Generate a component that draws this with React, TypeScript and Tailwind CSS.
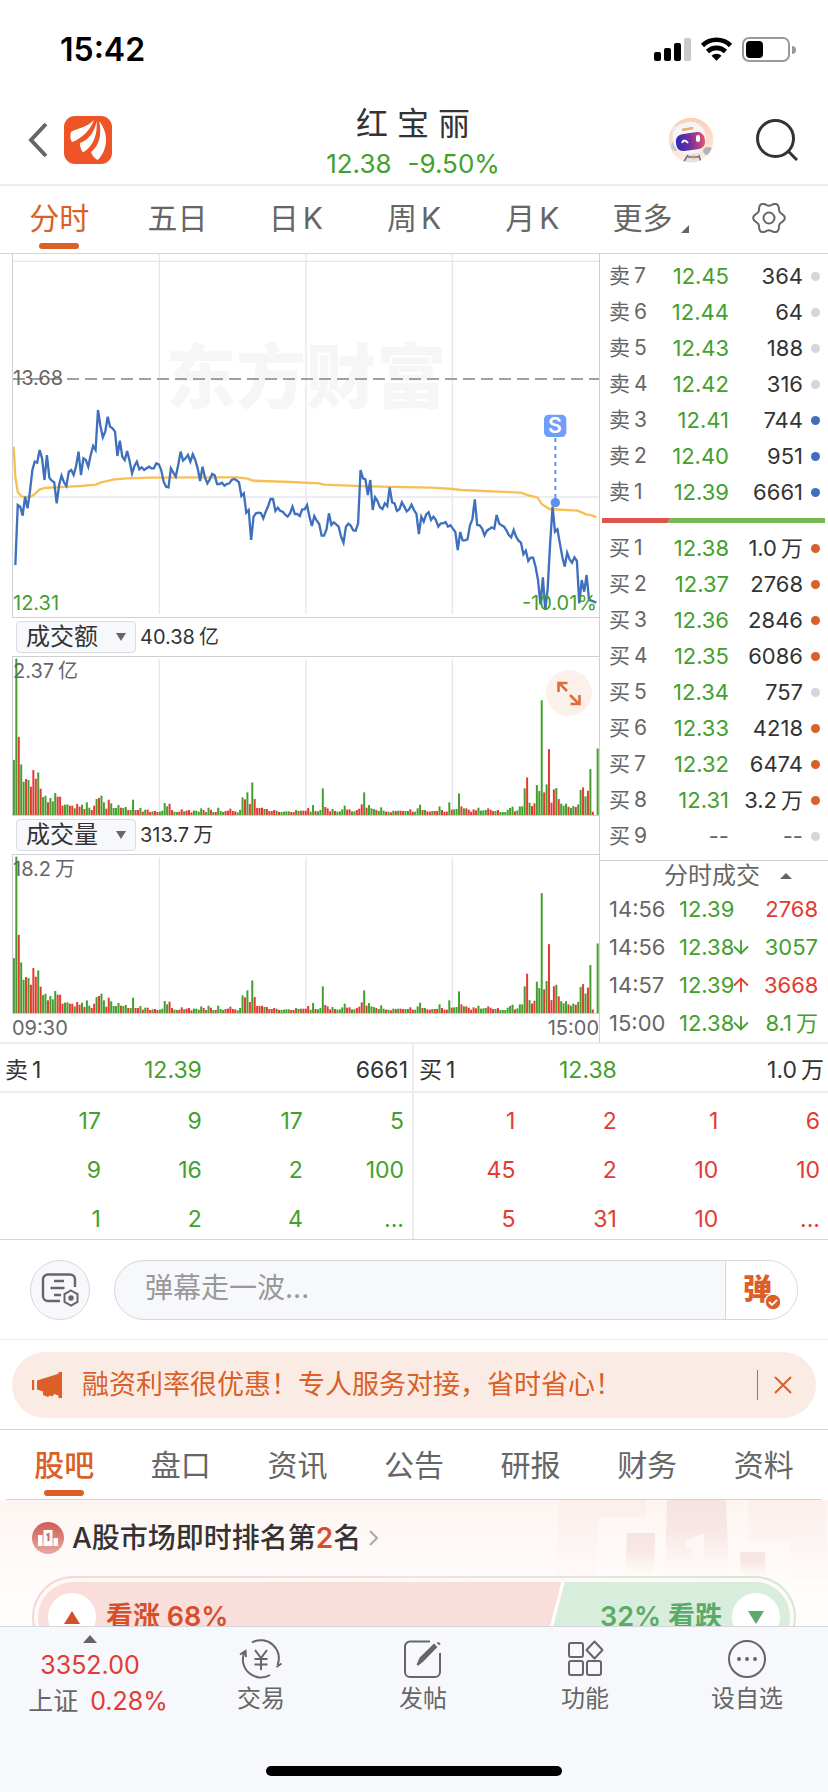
// src/pages/StockDetail.tsx
import React, { useState } from 'react';
import { ArrowDown, ArrowUp } from 'lucide-react';

const CHART_TABS = ['分时', '五日', '日K', '周K', '月K', '更多'];
const INFO_TABS = ['股吧', '盘口', '资讯', '公告', '研报', '财务', '资料'];

const SELLS = [
  ['卖7', '12.45', '364', 'gray'],
  ['卖6', '12.44', '64', 'gray'],
  ['卖5', '12.43', '188', 'gray'],
  ['卖4', '12.42', '316', 'gray'],
  ['卖3', '12.41', '744', 'blue'],
  ['卖2', '12.40', '951', 'blue'],
  ['卖1', '12.39', '6661', 'blue'],
];

const BUYS = [
  ['买1', '12.38', '1.0万', 'orange'],
  ['买2', '12.37', '2768', 'orange'],
  ['买3', '12.36', '2846', 'orange'],
  ['买4', '12.35', '6086', 'orange'],
  ['买5', '12.34', '757', 'gray'],
  ['买6', '12.33', '4218', 'orange'],
  ['买7', '12.32', '6474', 'orange'],
  ['买8', '12.31', '3.2万', 'orange'],
  ['买9', '--', '--', 'gray'],
];

const TRADES = [
  { time: '14:56', price: '12.39', dir: '', qty: '2768', up: true },
  { time: '14:56', price: '12.38', dir: 'down', qty: '3057', up: false },
  { time: '14:57', price: '12.39', dir: 'up', qty: '3668', up: true },
  { time: '15:00', price: '12.38', dir: 'down', qty: '8.1万', up: false },
];

const SELL_QUEUE = [['17', '9', '17', '5'], ['9', '16', '2', '100'], ['1', '2', '4', '...']];
const BUY_QUEUE = [['1', '2', '1', '6'], ['45', '2', '10', '10'], ['5', '31', '10', '...']];

const DOTS: Record<string, string> = {
  gray: 'bg-[#d5d6dc]',
  blue: 'bg-[#3f70bd]',
  orange: 'bg-[#db5f27]',
};

// One value per minute, in chart units (larger is lower)
const PRICE_LINE = [
  945, 765, 770, 797, 740, 775, 725, 660, 635, 638, 600, 625, 690, 615, 683, 692, 697, 760, 705, 677,
  697, 708, 665, 660, 675, 648, 605, 675, 625, 630, 650, 615, 588, 600, 480, 528, 562, 545, 500, 530,
  535, 545, 618, 572, 620, 630, 603, 633, 670, 648, 635, 658, 652, 660, 655, 650, 655, 655, 640, 643,
  660, 695, 710, 712, 655, 668, 680, 645, 605, 632, 625, 615, 635, 613, 630, 655, 693, 650, 682, 700,
  688, 672, 676, 702, 702, 698, 707, 702, 700, 690, 687, 691, 697, 738, 730, 788, 780, 870, 800, 790,
  788, 789, 805, 785, 768, 747, 747, 783, 773, 783, 785, 794, 800, 790, 770, 792, 792, 798, 778, 778,
  765, 800, 828, 798, 812, 822, 857, 857, 838, 790, 825, 817, 823, 830, 860, 878, 830, 821, 827, 841,
  842, 820, 660, 685, 688, 735, 690, 780, 742, 753, 772, 777, 760, 768, 712, 757, 760, 783, 778, 757,
  770, 784, 778, 764, 780, 792, 852, 800, 815, 793, 787, 810, 800, 810, 830, 820, 820, 816, 830, 826,
  836, 846, 900, 846, 871, 871, 868, 827, 808, 748, 825, 826, 836, 856, 842, 837, 832, 836, 795, 820,
  826, 830, 841, 855, 862, 840, 860, 872, 878, 913, 902, 933, 923, 923, 950, 990, 1063, 982, 1080, 1015,
  880, 770, 845, 838, 880, 920, 950, 908, 928, 938, 922, 933, 1060, 990, 1025, 975, 1050, 1052, 1055, 1058,
];

const AVG_LINE =
  '38,590 43,680 50,725 60,738 70,741 88,741 100,733 115,719 130,714 160,712 200,710 240,708 285,704 300,697 340,688 380,685 450,683 600,682 710,682 740,686 755,692 870,696 954,700 970,704 1100,709 1290,713 1355,717 1380,720 1560,728 1578,735 1610,743 1622,762 1645,777 1730,782 1755,793 1775,797 1786,802';

// g = fell, r = rose, followed by the bar height
const BARS =
  'g165 g470 r235 g152 g100 r108 g105 r85 r135 r109 g128 r79 g54 g58 r38 g51 g41 g66 r55 r55 r28 g31 g32 r28 r28 g20 r33 r25 g31 r18 g38 g22 r15 r28 g48 r51 g58 g38 r19 r46 g35 g21 g21 g30 r22 g21 g24 r15 g15 g46 r15 r15 g21 r10 g16 r16 r9 g11 r12 r9 g10 g13 g36 g26 r34 r15 g10 g9 r10 r17 g11 r13 r15 r8 g13 g13 g10 g20 r15 g9 g22 r16 g9 r9 g22 g12 g9 r12 r13 r19 r12 r11 g8 g15 g53 r47 g68 r33 g98 r48 r21 r21 r22 g18 r18 r12 r12 r15 g13 r9 g9 g10 g11 g11 r9 r9 g15 r12 g13 r13 r13 r21 g10 g30 r12 g11 g15 g80 r24 r20 r11 g18 r12 g10 g11 g17 g28 r16 r17 g11 g11 r15 r19 r32 g68 r22 g30 g20 g18 r15 g12 g23 g13 r10 g10 r8 g13 r12 g13 r13 r12 g12 g12 r17 r10 g10 g20 g31 r15 g15 r11 r10 g12 r12 r12 g26 r15 r10 r10 g38 r16 g17 g18 g65 r26 g20 r20 r16 r10 r17 r14 g22 g13 g14 g15 r20 r16 r12 g12 r15 g9 g9 g9 g16 g21 g25 r11 g14 g26 g26 g80 r113 g37 r27 r35 g90 g72 g345 r68 g92 r198 r37 r77 g81 r48 g34 g28 g34 r25 g21 g27 r24 g32 g75 r83 g56 r73 g138 r10 g0 g200'
    .split(' ')
    .map((b) => ({ color: b[0] === 'g' ? '#43a02c' : '#e23b33', h: Number(b.slice(1)) }));

// Puts a small gap where Chinese characters meet digits or letters
const Spaced: React.FC<{ text: string }> = ({ text }) => (
  <span className="inline-flex items-center gap-1">
    {text.split(/(?<=[一-龥])(?=[\dK])|(?<=\d)(?=[一-龥])/).map((part, i) => (
      <span key={i}>{part}</span>
    ))}
  </span>
);

const StatusBar: React.FC = () => (
  <div className="flex h-[100px] shrink-0 items-center justify-between pl-[60px] pr-8">
    <span className="text-[32px] font-semibold leading-10 text-black">15:42</span>
    <svg width="142" height="26" viewBox="0 0 142 26">
      <rect x="0" y="15" width="7" height="9" rx="2" />
      <rect x="10" y="11" width="7" height="13" rx="2" />
      <rect x="20" y="6" width="7" height="18" rx="2" />
      <rect x="30" y="1" width="7" height="23" rx="2" fill="#c9c9c9" />
      <g fill="none" stroke="#000" strokeWidth="4.6">
        <path d="M48.5 8.5a20 20 0 0 1 28 0" />
        <path d="M53.5 14.5a13 13 0 0 1 18 0" />
      </g>
      <path d="M57.500 18.800a7 7 0 0 1 10 0l-5 5z" />
      <rect x="89" y="1" width="46" height="23" rx="6" fill="none" stroke="#9a9a9a" strokeWidth="2" />
      <rect x="92" y="4" width="17" height="17" rx="4" />
      <path d="M138 9a4 4 0 0 1 0 8z" fill="#9a9a9a" />
    </svg>
  </div>
);

const Robot: React.FC = () => (
  <svg width="46" height="46" viewBox="0 0 46 46">
    <defs>
      <linearGradient id="visor" x1="0" x2="1">
        <stop offset="0" stopColor="#2c2bb5" />
        <stop offset="0.5" stopColor="#7a2fa0" />
        <stop offset="1" stopColor="#e0566e" />
      </linearGradient>
      <linearGradient id="halo" x1="0" y1="0" x2="0" y2="1">
        <stop offset="0" stopColor="#fad0b8" />
        <stop offset="1" stopColor="#fdeee6" />
      </linearGradient>
      <clipPath id="face"><circle cx="23" cy="23" r="22.500" /></clipPath>
    </defs>
    <g clipPath="url(#face)">
      <circle cx="23" cy="23" r="22.500" fill="url(#halo)" />
      <path d="M16 46l2-10h14l2 10z" fill="#e3e1e3" />
      <path d="M20 38l-5 8M31 38l2 8M20 40h11" stroke="#77727a" strokeWidth="1.5" />
      <circle cx="26" cy="40" r="1.500" fill="#f08b4a" />
      <ellipse cx="7" cy="29" rx="4" ry="5" fill="#c9c6ce" />
      <ellipse cx="40" cy="34" rx="5" ry="4" fill="#b4b2b8" />
      <path d="M2 5l7 5-4 8z" fill="#ebe8ea" />
      <rect x="5" y="5" width="33" height="32" rx="15" fill="#f6f5f6" transform="rotate(-8 22 22)" />
      <rect x="8" y="16" width="29" height="17" rx="7" fill="url(#visor)" transform="rotate(-8 23 25)" />
    </g>
    <path d="M14 13l11-2" stroke="#e2ad74" strokeWidth="2.5" />
    <path d="M14 26q2-5 6 0" fill="none" stroke="#fff" strokeWidth="2" />
    <rect x="28" y="18" width="4" height="7" rx="2" fill="#fff" />
  </svg>
);

const Header: React.FC = () => (
  <header className="flex h-[86px] shrink-0 items-center justify-between border-b-2 border-[#ececec] pl-7 pr-[30px]">
    <div className="flex w-40 items-center gap-4 pb-1">
      <button aria-label="返回">
        <svg width="20" height="36" viewBox="0 0 20 36" fill="none" stroke="#666" strokeWidth="4">
          <path d="M18 2L3 18l15 16" />
        </svg>
      </button>
      <a href="#home" aria-label="首页">
        <svg width="48" height="48" viewBox="0 0 48 48">
          <rect width="48" height="48" rx="11" fill="#ee5428" />
          <g fill="#fff">
            <path d="M30 4C24 11 14 12 7 16C6 20 6 23 8 26C17 23 26 15 30 4Z" />
            <path d="M32.500 5C31 15 25 24 16 27C16 31 17 34 19 36.500C29 31 34 18 32.500 5Z" />
            <path d="M35 5C38 17 36 29 27 36C28 39 30 42 33.500 44C43 36 46 18 35 5Z" />
          </g>
        </svg>
      </a>
    </div>
    <div className="flex flex-col items-center pt-1">
      <h1 className="text-[32px] leading-10 text-[#333]">红 宝 丽</h1>
      <p className="flex gap-4 text-[26px] leading-10 text-[#43a02c]">
        <span>12.38</span>
        <span>-9.50%</span>
      </p>
    </div>
    <div className="flex w-40 items-center justify-end gap-[42px] pb-1">
      <button aria-label="助手"><Robot /></button>
      <button aria-label="搜索">
        <svg width="42" height="42" viewBox="0 0 42 42" fill="none" stroke="#333" strokeWidth="3">
          <circle cx="19.500" cy="19.500" r="18" />
          <path d="M32 32l9 9" />
        </svg>
      </button>
    </div>
  </header>
);

const gearPath = Array.from({ length: 72 }, (_, i) => {
  const a = (i * Math.PI) / 36;
  const r = 14 + 1.8 * Math.cos(6 * a);
  return `${(17 + r * Math.cos(a)).toFixed(1)},${(17 + r * Math.sin(a)).toFixed(1)}`;
}).join(' ');

const ChartTabs: React.FC = () => {
  const [active, setActive] = useState('分时');
  return (
    <nav className="grid h-[68px] shrink-0 grid-cols-7 border-b border-[#d5d6dc]">
      {CHART_TABS.map((tab) => (
        <button
          key={tab}
          onClick={() => setActive(tab)}
          className={`relative flex items-center justify-center pb-1 text-[30px] leading-10 ${
            tab === active ? 'text-[#db5f27]' : 'text-[#666]'
          }`}
        >
          <Spaced text={tab} />
          {tab === '更多' && (
            <svg width="8" height="8" viewBox="0 0 8 8" className="mb-4 ml-2 self-end"><path d="M8 0v8H0z" fill="#666" /></svg>
          )}
          {tab === active && <i className="absolute bottom-1 h-[6px] w-10 rounded-full bg-[#db5f27]" />}
        </button>
      ))}
      <button aria-label="设置" className="flex items-center justify-center pb-1">
        <svg width="34" height="34" viewBox="0 0 34 34" fill="none" stroke="#666" strokeWidth="2">
          <polygon points={gearPath} strokeLinejoin="round" />
          <circle cx="17" cy="17" r="5.500" />
        </svg>
      </button>
    </nav>
  );
};

const PriceChart: React.FC = () => {
  const step = (1786 - 43) / (PRICE_LINE.length - 1);
  const line = PRICE_LINE.map((y, i) => `${(43 + i * step).toFixed(1)},${y}`).join(' ');
  return (
    <div className="relative h-[364px] border-b border-l border-[#cfd0d6] text-xl leading-6">
      <span className="absolute inset-x-0 top-[76px] text-center text-[70px] font-black leading-[96px] text-[#f6f6f6]">
        东方财富
      </span>
      <svg className="absolute inset-0 h-full w-full" viewBox="36 12 1758 1089" preserveAspectRatio="none">
        <g stroke="#e6e7ee" strokeWidth="4">
          <path d="M475 12V1093M915 12V1093M1354 12V1093M36 34H1794M36 741H1794" />
        </g>
        <path d="M36 387H1794" stroke="#a0a0a3" strokeWidth="6" strokeDasharray="36 18" />
        <polyline points={AVG_LINE} fill="none" stroke="#f6c055" strokeWidth="7" strokeLinejoin="round" />
        <polyline points={line} fill="none" stroke="#3f70bd" strokeWidth="7" />
        <path d="M1663 564V745" stroke="#5b97f7" strokeWidth="6" strokeDasharray="12 12" />
        <circle cx="1663" cy="758" r="14" fill="#5b8ff0" />
        <rect x="1629" y="494" width="67" height="67" rx="14" fill="#6f9ff8" />
        <text x="1662" y="549" fontSize="64" fontWeight="600" fill="#fff" textAnchor="middle">S</text>
      </svg>
      <span className="absolute left-0 top-28 text-[#666]">13.68</span>
      <span className="absolute bottom-[2px] left-0 text-[#43a02c]">12.31</span>
      <span className="absolute bottom-[2px] right-[2px] text-[#43a02c]">-10.01%</span>
    </div>
  );
};

interface BarPanelProps {
  label: string;
  total: string;
  max: string;
  lateScale: number;
  expandable?: boolean;
}

const BarPanel: React.FC<BarPanelProps> = ({ label, total, max, lateScale, expandable }) => {
  const step = (1790 - 46) / (BARS.length - 2);
  return (
    <>
      <div className="flex h-[38px] items-center gap-1 pl-1">
        <div className="relative">
          <select
            aria-label="指标"
            defaultValue={label}
            className="block h-8 w-[120px] appearance-none rounded-sm border border-[#d9dbe1] bg-[#f7f8fb] pl-[9px] text-2xl leading-7 text-[#333]"
          >
            <option>成交额</option>
            <option>成交量</option>
          </select>
          <svg width="10" height="8" viewBox="0 0 10 8" className="pointer-events-none absolute right-[10px] top-3">
            <path d="M0 0h10L5 8z" fill="#666" />
          </svg>
        </div>
        <span className="text-xl leading-6 text-[#333]"><Spaced text={total} /></span>
      </div>
      <div className="relative h-[160px] border-y border-l border-[#cfd0d6] text-xl leading-6">
        <svg className="absolute inset-0 h-full w-full" viewBox="36 50 1758 475" preserveAspectRatio="none">
          <path d="M475 56V525M915 56V525M1354 56V525" stroke="#e6e7ee" strokeWidth="4" />
          {BARS.map((b, i) => {
            const h = i > 210 ? b.h * lateScale : b.h;
            return <rect key={i} x={43 + (i - 1) * step} y={525 - h} width="6" height={h} fill={b.color} />;
          })}
        </svg>
        <span className="absolute left-0 top-[2px] text-[#666]"><Spaced text={max} /></span>
        {expandable && (
          <button aria-label="展开" className="absolute right-[7px] top-[13px] rounded-full bg-[#fcf1ea]">
            <svg width="46" height="46" viewBox="0 0 46 46" fill="none" stroke="#dd6e3a" strokeWidth="2.6">
              <path d="M12.500 22V13h9M13 13l8 8M24 25l9 9M33.500 25v9h-9" />
            </svg>
          </button>
        )}
      </div>
    </>
  );
};

const BookRows: React.FC<{ rows: string[][] }> = ({ rows }) => (
  <table className="w-full table-fixed text-[22px] leading-6">
    <tbody>
      {rows.map(([name, price, qty, dot]) => (
        <tr key={name} className="h-9">
          <th className="w-[50px] p-0 pl-[9px] text-left text-[21px] font-normal text-[#666]"><Spaced text={name} /></th>
          <td className={`w-[79px] p-0 text-right ${price === '--' ? 'text-[#666]' : 'text-[#43a02c]'}`}>{price}</td>
          <td className={`p-0 text-right ${qty === '--' ? 'text-[#666]' : 'text-[#333]'}`}><Spaced text={qty} /></td>
          <td className="w-[25px] p-0 pl-2">
            <i className={`block h-[9px] w-[9px] rounded-full ${DOTS[dot]}`} />
          </td>
        </tr>
      ))}
    </tbody>
  </table>
);

const OrderBook: React.FC = () => (
  <aside className="w-[229px] shrink-0 border-l border-[#cfd0d6] pt-1">
    <BookRows rows={SELLS} />
    <svg className="mb-[7px] ml-[2px] mt-2 block h-[5px] w-[223px]" viewBox="0 0 223 5" preserveAspectRatio="none">
      <path d="M0 0H69L65 5H0z" fill="#dd564e" />
      <path d="M69 0H223V5H65z" fill="#77ba55" />
    </svg>
    <BookRows rows={BUYS} />
    <button className="mt-[6px] flex h-[30px] w-full items-center justify-center gap-5 border-t border-[#cfd0d6] pl-7 text-2xl leading-7 text-[#666]">
      分时成交
      <svg width="12" height="6" viewBox="0 0 12 6"><path d="M6 0l6 6H0z" fill="#666" /></svg>
    </button>
    <table className="w-full table-fixed text-[22px] leading-6">
      <tbody>
        {TRADES.map((t, i) => (
          <tr key={i} className="h-[38px]">
            <td className="w-[79px] p-0 pl-[9px] text-[#666]">{t.time}</td>
            <td className="p-0 text-[#43a02c]">
              <span className="flex items-center">
                {t.price}
                {t.dir === 'down' && <ArrowDown size={22} strokeWidth={2} className="-mx-1 shrink-0 text-[#43a02c]" />}
                {t.dir === 'up' && <ArrowUp size={22} strokeWidth={2} className="-mx-1 shrink-0 text-[#e23b33]" />}
              </span>
            </td>
            <td className={`w-16 p-0 pr-[10px] text-right ${t.up ? 'text-[#e23b33]' : 'text-[#43a02c]'}`}>
              <Spaced text={t.qty} />
            </td>
          </tr>
        ))}
      </tbody>
    </table>
  </aside>
);

const Queue: React.FC<{ name: string; price: string; qty: string; rows: string[][]; color: string }> = ({
  name, price, qty, rows, color,
}) => (
  <table className="w-full table-fixed text-[23px] leading-7">
    <colgroup>
      <col className="w-[24.5%]" />
      <col className="w-[24.5%]" />
      <col className="w-[24.5%]" />
      <col />
    </colgroup>
    <thead>
      <tr className="h-[48px] border-b-2 border-[#ececf0] text-[#333]">
        <th className="p-0 pl-[5px] pt-1 text-left font-normal"><Spaced text={name} /></th>
        <th className="p-0 pt-1 text-right font-normal text-[#43a02c]">{price}</th>
        <th colSpan={2} className="p-0 pr-1 pt-1 text-right font-normal"><Spaced text={qty} /></th>
      </tr>
    </thead>
    <tbody className={color}>
      {rows.map((row, i) => (
        <tr key={i} className="h-[49px]">
          {row.map((v, j) => (
            <td key={j} className="p-0 pt-2 text-right last:pr-2">{v}</td>
          ))}
        </tr>
      ))}
    </tbody>
  </table>
);

const CommentBar: React.FC = () => (
  <div className="flex h-[100px] shrink-0 items-center gap-6 border-b border-[#ececec] px-[30px]">
    <button aria-label="弹幕设置" className="flex h-[60px] w-[60px] shrink-0 items-center justify-center rounded-full border border-[#d5d6dc] bg-[#f7f8fb]">
      <svg width="38" height="34" viewBox="0 0 38 34" fill="none" stroke="#666" strokeWidth="2.4">
        <path d="M19 28H7a5 5 0 0 1-5-5V6.500a5 5 0 0 1 5-5H29a5 5 0 0 1 5 5V14" />
        <path d="M13 8h10M9.500 15h14M13 22h7" />
        <path d="M30 17.500l6.500 3.700v7.600L30 32.500l-6.500-3.700v-7.600z" strokeWidth="2" />
        <circle cx="30" cy="25" r="1.500" />
      </svg>
    </button>
    <div className="flex h-[60px] flex-1 overflow-hidden rounded-full border border-[#d5d6dc] bg-[#f7f8fb]">
      <input
        type="text"
        aria-label="弹幕"
        placeholder="弹幕走一波..."
        className="min-w-0 flex-1 bg-transparent pb-1 pl-[30px] text-[28px] text-[#333] outline-none placeholder:text-[#999]"
      />
      <button className="relative w-[72px] border-l border-[#d5d6dc] bg-white pr-2 text-[29px] font-black leading-10 text-[#db5f27]">
        弹
        <svg width="18" height="18" viewBox="0 0 18 18" className="absolute right-[15px] top-8">
          <circle cx="9" cy="9" r="8" fill="#db5f27" stroke="#fff" strokeWidth="1.500" />
          <path d="M5 9l3 3 5-5" fill="none" stroke="#fff" strokeWidth="1.800" />
        </svg>
      </button>
    </div>
  </div>
);

const Notice: React.FC = () => (
  <div className="shrink-0 border-b border-[#d5d6dc] px-3 pb-[11px] pt-3">
    <div className="flex h-[66px] items-center rounded-full bg-[#faece5] pl-5 pr-6 text-[#db5f27]">
      <svg width="30" height="26" viewBox="0 0 30 26" fill="currentColor">
        <path d="M0 8h2.200v10H0zM5 8.500L26.500 1.800V0H30v26h-3.500v-2.500L22 22l-1.500 2.500-3-1L16 25l-5-2v-3.500L5 17.500z" />
      </svg>
      <p className="ml-5 flex-1 whitespace-nowrap text-[27px] leading-9">融资利率很优惠！专人服务对接，省时省心！</p>
      <i className="h-[30px] w-px bg-current" />
      <button aria-label="关闭" className="ml-4">
        <svg width="18" height="18" viewBox="0 0 18 18" stroke="currentColor" strokeWidth="2"><path d="M1 1l16 16M17 1L1 17" /></svg>
      </button>
    </div>
  </div>
);

const InfoTabs: React.FC = () => {
  const [active, setActive] = useState('股吧');
  return (
    <nav className="mx-[6px] grid h-[70px] shrink-0 grid-cols-7 border-b border-[#d5d6dc]">
      {INFO_TABS.map((tab) => (
        <button
          key={tab}
          onClick={() => setActive(tab)}
          className={`relative flex items-center justify-center text-[30px] leading-10 ${
            tab === active ? 'font-medium text-[#db5f27]' : 'text-[#666]'
          }`}
        >
          {tab}
          {tab === active && <i className="absolute bottom-[3px] h-[6px] w-10 rounded-full bg-[#db5f27]" />}
        </button>
      ))}
    </nav>
  );
};

const Ranking: React.FC = () => (
  <section className="relative min-h-0 flex-1 overflow-hidden bg-linear-to-b from-[#fdf5f2] to-[#fffcfb] to-70% px-8 pt-5">
    <svg width="278" height="90" viewBox="0 0 278 90" className="absolute right-0 top-0">
      <defs>
        <linearGradient id="podium" x1="0" y1="0" x2="0" y2="1">
          <stop offset="0" stopColor="#f3dcd9" stopOpacity="0.7" />
          <stop offset="0.4" stopColor="#f5e0dd" stopOpacity="0.7" />
          <stop offset="1" stopColor="#fdf4f2" stopOpacity="0.1" />
        </linearGradient>
        <linearGradient id="shade" x1="0" y1="0" x2="0" y2="1">
          <stop offset="0" stopColor="#fbebe8" stopOpacity="0.7" />
          <stop offset="1" stopColor="#fdf4f2" stopOpacity="0.2" />
        </linearGradient>
      </defs>
      <path d="M9 0H96V17H49L46 78H5zM198 0H275L278 80H242L239 41H199z" fill="url(#shade)" />
      <path d="M77 33H105L104 78H75z" fill="url(#podium)" />
      <path d="M117 0H176L179 78H115z" fill="url(#podium)" />
      <path d="M190 52H215L216 78H191z" fill="url(#podium)" />
      <path d="M136 40L154 34V65H142V48H136z" fill="#fdf6f4" />
    </svg>
    <a href="#rank" className="relative flex items-center gap-2 text-[28px] font-medium leading-9 text-[#333]">
      <svg width="32" height="32" viewBox="0 0 32 32">
        <defs>
          <linearGradient id="badge" x1="0" y1="0" x2="0" y2="1">
            <stop offset="0" stopColor="#cf5a54" />
            <stop offset="1" stopColor="#e9aaa3" />
          </linearGradient>
        </defs>
        <circle cx="16" cy="16" r="16" fill="url(#badge)" />
        <path d="M6 13h4.500v11H6zM11.500 8h9v16h-9zM21.500 16H26v8h-4.500z" fill="#fff" />
        <path d="M14.500 13l2-1v7" fill="none" stroke="#cf6a64" strokeWidth="2" />
      </svg>
      <span>A股市场即时排名第<b className="font-semibold text-[#d5502a]">2</b>名</span>
      <svg width="10" height="16" viewBox="0 0 10 16" fill="none" stroke="#a8a8a8" strokeWidth="2"><path d="M1 1l7 7-7 7" /></svg>
    </a>
    <div className="relative mt-5 rounded-full bg-linear-to-r from-[#f6d6d1] via-[#f3e3da] to-[#cfe9d4] p-[2px]">
      <div className="rounded-full bg-[#fffaf8] p-1">
        <div className="relative flex h-[70px] items-center justify-between overflow-hidden rounded-full bg-[#f9dedb] px-[10px] text-[27px] font-semibold leading-9">
          <svg className="absolute inset-y-0 right-0 h-full w-[32%]" viewBox="0 0 240 70" preserveAspectRatio="none">
            <path d="M16 0H240V70H-2z" fill="#d9eddd" />
            <path d="M14 0L-4 70" stroke="#fff" strokeWidth="3" />
          </svg>
          <button className="relative flex items-center gap-[10px] text-[#d5502a]">
            <i className="flex h-12 w-12 items-center justify-center rounded-full bg-white">
              <svg width="16" height="13" viewBox="0 0 16 13"><path d="M8 0l8 13H0z" fill="currentColor" /></svg>
            </i>
            <span>看涨 68%</span>
          </button>
          <button className="relative flex items-center gap-[10px] text-[#5aab68]">
            <span>32% 看跌</span>
            <i className="flex h-12 w-12 items-center justify-center rounded-full bg-white">
              <svg width="16" height="13" viewBox="0 0 16 13"><path d="M0 0h16L8 13z" fill="currentColor" /></svg>
            </i>
          </button>
        </div>
      </div>
    </div>
  </section>
);

const NAV_ITEMS = [
  {
    label: '交易',
    icon: (
      <>
        <path d="M11 3.500A18 18 0 0 1 36.500 26M35.500 28l5-3.500M29 36A18 18 0 0 1 3.500 13M-1 15.500L4.500 12l.5 6" />
        <path d="M14 11l6 8 6-8M13.500 20h13M13.500 25.500h13M20 19v12" />
      </>
    ),
  },
  {
    label: '发帖',
    icon: (
      <>
        <path d="M27 2.500H7a5 5 0 0 0-5 5V33a5 5 0 0 0 5 5H32a5 5 0 0 0 5-5V14" />
        <path d="M14.500 26l3-7L31 6l2 2L20 21.500zM34.500 3.500L37 5.500" fill="#666" />
      </>
    ),
  },
  {
    label: '功能',
    icon: (
      <>
        <rect x="4" y="4" width="14" height="14" rx="2" />
        <rect x="4" y="22" width="14" height="14" rx="2" />
        <rect x="22" y="22" width="14" height="14" rx="2" />
        <path d="M29.500 2.500l8 8.500-8 8.500-8-8.500z" strokeLinejoin="round" />
      </>
    ),
  },
  {
    label: '设自选',
    icon: (
      <>
        <circle cx="20" cy="20" r="18" />
        <g fill="#666" stroke="none">
          <circle cx="12" cy="20" r="2" />
          <circle cx="20" cy="20" r="2" />
          <circle cx="28" cy="20" r="2" />
        </g>
      </>
    ),
  },
];

const BottomNav: React.FC = () => (
  <footer className="shrink-0 border-t border-[#d5d6dc] bg-[#f7f8fb]">
    <div className="flex h-[139px]">
      <button className="flex w-[180px] flex-col items-center pt-2 text-[25px] text-[#e23b33]">
        <svg width="14" height="8" viewBox="0 0 14 8"><path d="M7 0l7 8H0z" fill="#666" /></svg>
        <span className="mt-1 leading-9">3352.00</span>
        <span className="flex gap-3 pl-4 leading-9">
          <span className="text-[#666]">上证</span>0.28%
        </span>
      </button>
      {NAV_ITEMS.map((item) => (
        <button key={item.label} className="flex flex-1 flex-col items-center gap-1 pt-3 text-2xl leading-8 text-[#666]">
          <svg width="40" height="40" viewBox="0 0 40 40" fill="none" stroke="#666" strokeWidth="2" overflow="visible">
            {item.icon}
          </svg>
          {item.label}
        </button>
      ))}
    </div>
    <div className="mx-auto mb-4 h-[10px] w-[296px] rounded-full bg-black" />
  </footer>
);

const App: React.FC = () => (
  <main className="flex h-screen flex-col overflow-hidden bg-white font-['Inter','Noto_Sans_CJK_SC',sans-serif]">
    <StatusBar />
    <Header />
    <ChartTabs />

    {/* Intraday chart + order book */}
    <div className="flex shrink-0">
      <div className="min-w-0 flex-1 pl-3">
        <PriceChart />
        <BarPanel label="成交额" total="40.38亿" max="2.37亿" lateScale={1} expandable />
        <BarPanel label="成交量" total="313.7万" max="18.2万" lateScale={1.045} />
        <div className="flex justify-between text-xl leading-7 text-[#666]">
          <span>09:30</span>
          <span>15:00</span>
        </div>
      </div>
      <OrderBook />
    </div>

    {/* Order queues */}
    <div className="grid shrink-0 grid-cols-2 border-b border-t-2 border-b-[#d5d6dc] border-t-[#ececf0]">
      <div className="border-r-2 border-[#ececf0]">
        <Queue name="卖1" price="12.39" qty="6661" rows={SELL_QUEUE} color="text-[#43a02c]" />
      </div>
      <Queue name="买1" price="12.38" qty="1.0万" rows={BUY_QUEUE} color="text-[#e23b33]" />
    </div>

    <CommentBar />
    <Notice />
    <InfoTabs />
    <Ranking />
    <BottomNav />
  </main>
);

export default App;
